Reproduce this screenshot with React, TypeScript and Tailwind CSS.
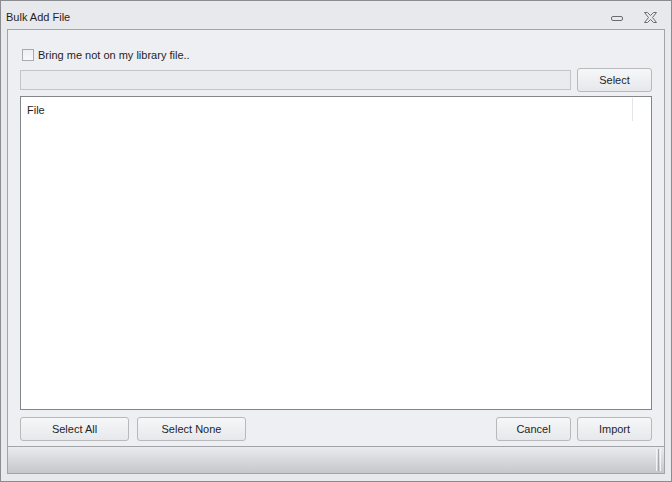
import React from 'react';

const font = { fontFamily: '"Liberation Sans", Arial, sans-serif' };

function Btn({ label, w }: { label: string; w: string }) {
    return (
        <button className={`${w} h-[24px] rounded-[3px] border border-[#b8b9bc] bg-gradient-to-b from-[#f6f7f8] to-[#e7e8eb] text-[11px] text-[#1f1f1f] flex items-center justify-center pt-[1px]`}>
            {label}
        </button>
    );
}

export default function App() {
    return (
        <div style={font} className="w-[672px] h-[482px] border border-[#8b8c8f] bg-[#e8e9ec] flex flex-col text-[#1f1f1f]">
            {/* Title bar */}
            <div className="h-[28px] flex items-center pl-[5px] pr-[14px]">
                <span className="text-[11px] mt-[4px]">Bulk Add File</span>
                <div className="ml-auto flex items-center gap-[20px] mt-[4px]">
                    <svg width="13" height="6" viewBox="0 0 13 6" className="mt-[3px]">
                        <rect x="0.5" y="0.5" width="11" height="4" rx="1.5" fill="none" stroke="#6b6c70" />
                    </svg>
                    <svg width="13" height="11" viewBox="0 0 13 11">
                        <path
                            d="M0.5 0.5 H3.5 L6.5 3.5 L9.5 0.5 H12.5 L8.5 5.5 L12.5 10.5 H9.5 L6.5 7.5 L3.5 10.5 H0.5 L4.5 5.5 Z"
                            fill="none"
                            stroke="#6b6c70"
                            strokeLinejoin="round"
                        />
                    </svg>
                </div>
            </div>

            {/* Body */}
            <div className="flex-1 mx-[6px] mb-[7px] border border-[#a3a4a7] flex flex-col">
                <div className="flex-1 bg-[#eeeff2] flex flex-col px-[12px] pt-[17px] pb-[5px]">
                    <label className="flex items-center gap-[4px] pl-[2px] h-[16px] text-[11px]">
                        <span className="w-[12px] h-[12px] border border-[#a9aaad] bg-gradient-to-b from-[#eeeff1] to-[#f9f9fa]" />
                        Bring me not on my library file..
                    </label>

                    <div className="flex items-center gap-[6px] mt-[5px]">
                        <div className="flex-1 h-[20px] border border-[#c3c4c7] bg-[#eaebee]" />
                        <Btn label="Select" w="w-[75px]" />
                    </div>

                    <div className="flex-1 mt-[4px] border border-[#848589] bg-white">
                        <div className="flex h-[24px]">
                            <div className="flex-1 pl-[6px] pt-[5px] text-[11px]">File</div>
                            <div className="w-[1px] h-[23px] bg-[#e3e4e6] mr-[18px] mt-[1px]" />
                        </div>
                    </div>

                    <div className="flex items-center mt-[7px]">
                        <Btn label="Select All" w="w-[109px]" />
                        <div className="w-[8px]" />
                        <Btn label="Select None" w="w-[109px]" />
                        <div className="flex-1" />
                        <Btn label="Cancel" w="w-[75px]" />
                        <div className="w-[6px]" />
                        <Btn label="Import" w="w-[75px]" />
                    </div>
                </div>

                {/* Status bar */}
                <div className="h-[27px] border-t border-[#a3a4a7] bg-gradient-to-b from-[#eaebee] to-[#c6c7ca] flex items-end justify-end pr-[3px] pb-[2px]">
                    <div className="flex gap-[1px] h-[22px]">
                        <div className="w-[1px] bg-[#f4f4f6]" />
                        <div className="w-[1px] bg-[#a9aaad]" />
                        <div className="w-[1px] bg-[#f4f4f6]" />
                    </div>
                </div>
            </div>
        </div>
    );
}
